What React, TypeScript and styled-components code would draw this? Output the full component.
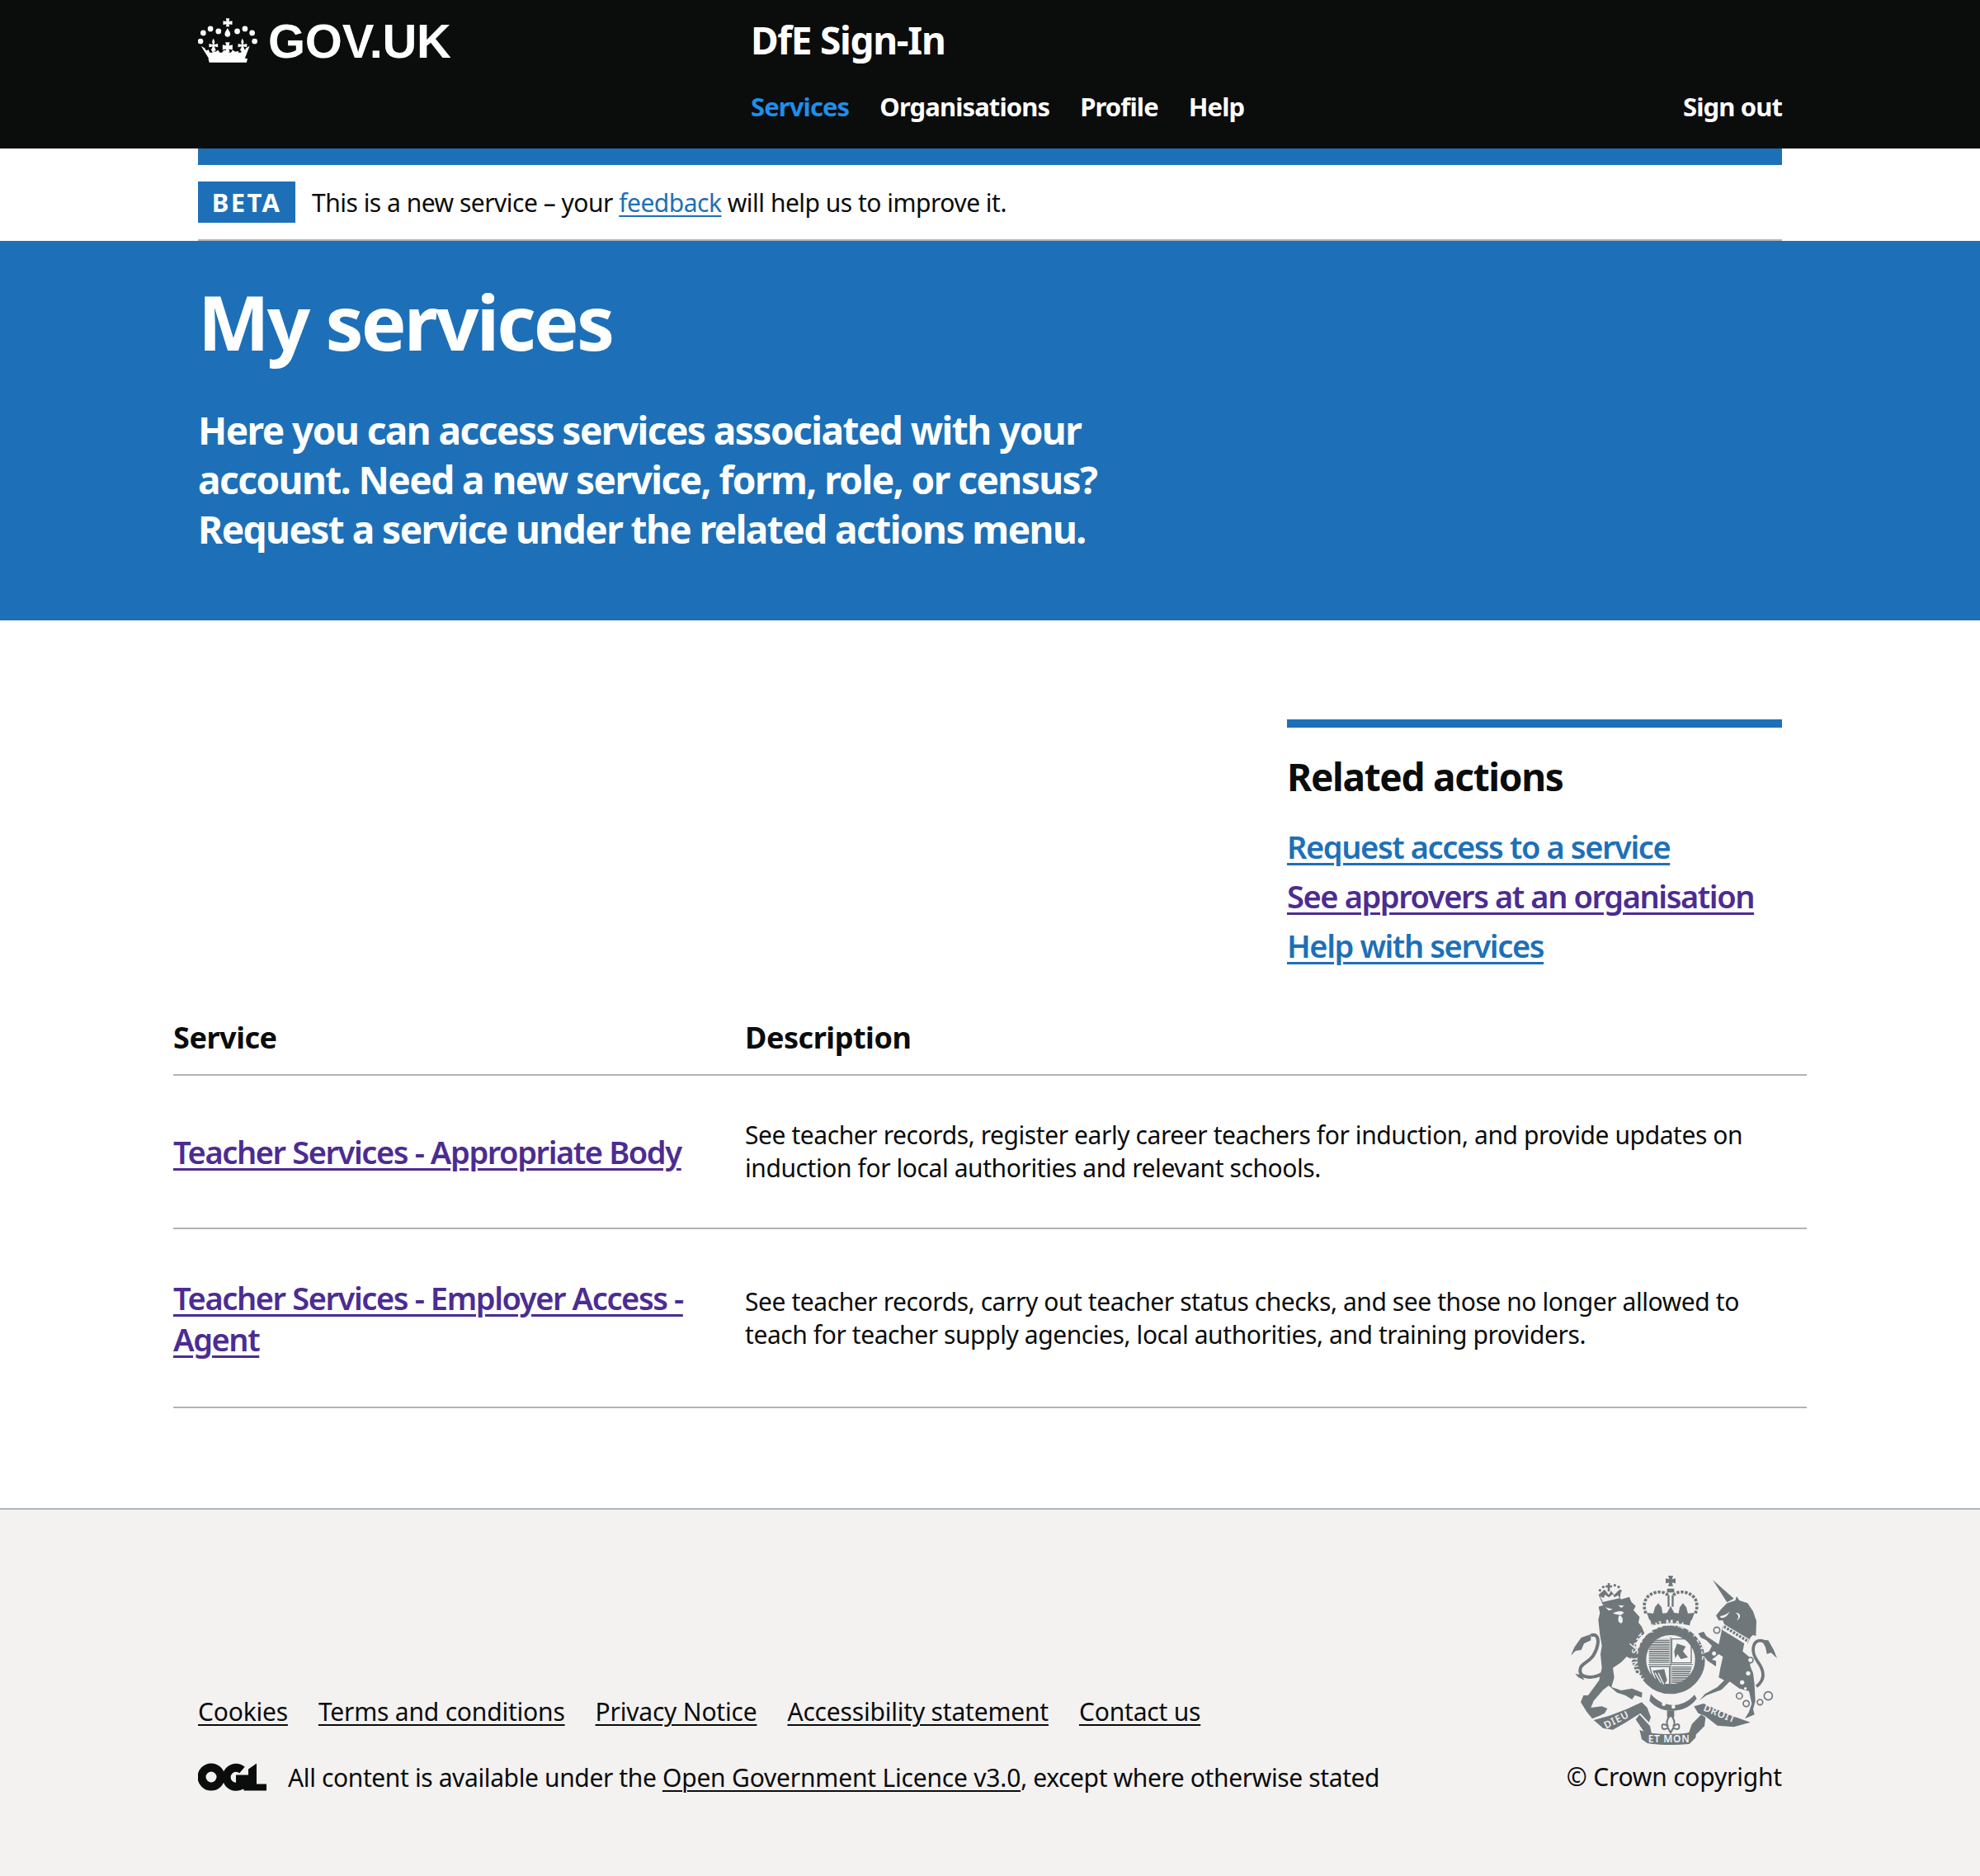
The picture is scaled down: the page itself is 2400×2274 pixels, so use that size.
import React from 'react';
import styled, { createGlobalStyle } from 'styled-components';

const GlobalStyle = createGlobalStyle`
  html, body { margin: 0; padding: 0; background: #fff; }
  body {
    font-family: "Noto Sans", "Open Sans", Arial, sans-serif;
    color: #0b0c0c;
  }
`;

const Page = styled.div`
  width: 2400px;
  height: 2274px;
  display: flex;
  flex-direction: column;
`;

const Container = styled.div`
  width: 1920px;
  margin: 0 auto;
`;

const Header = styled.header`
  background: #0b0c0c;
  height: 180px;
  color: #fff;
`;

const HeaderInner = styled(Container)`
  display: flex;
  height: 100%;
`;

const LogoCol = styled.div`
  width: 670px;
  display: flex;
  align-items: flex-start;
  padding-top: 22px;
  gap: 13px;
`;

const Logotype = styled.span`
  font-family: "Liberation Sans", Arial, sans-serif;
  font-weight: 700;
  font-size: 58px;
  line-height: 56px;
  letter-spacing: -0.3px;
`;

const HeaderMain = styled.div`
  flex: 1;
  display: flex;
  flex-direction: column;
`;

const ServiceName = styled.div`
  font-size: 46px;
  font-weight: 700;
  line-height: 60px;
  margin-top: 18px;
  letter-spacing: -1.3px;
`;

const Nav = styled.nav`
  display: flex;
  gap: 37px;
  margin-top: 26px;
  line-height: 50px;
`;

const NavLink = styled.a<{ $active?: boolean; $push?: boolean }>`
  font-size: 31px;
  font-weight: 700;
  letter-spacing: -0.9px;
  color: ${(p) => (p.$active ? '#1d8feb' : '#fff')};
  margin-left: ${(p) => (p.$push ? 'auto' : '0')};
`;

const BlueStrip = styled(Container)`
  height: 20px;
  background: #1d70b8;
`;

const Phase = styled(Container)`
  height: 90px;
  display: flex;
  align-items: center;
  gap: 20px;
  border-bottom: 2px solid #b1b4b6;
`;

const Tag = styled.span`
  background: #1d70b8;
  color: #fff;
  font-weight: 700;
  font-size: 31px;
  letter-spacing: 2.4px;
  width: 118px;
  height: 50px;
  display: flex;
  align-items: center;
  justify-content: center;
`;

const PhaseText = styled.span`
  font-size: 30px;
  letter-spacing: -0.5px;
`;

const TextLink = styled.a`
  color: #1d70b8;
  text-decoration: underline;
  text-decoration-thickness: 2px;
  text-underline-offset: 4px;
`;

const Hero = styled.section`
  background: #1d70b8;
  height: 460px;
  color: #fff;
`;

const HeroTitle = styled.h1`
  margin: 0;
  padding-top: 46px;
  font-size: 92px;
  line-height: 104px;
  font-weight: 700;
  letter-spacing: -2.9px;
`;

const HeroText = styled.p`
  margin: 49px 0 0;
  width: 1130px;
  font-size: 46px;
  line-height: 60px;
  font-weight: 700;
  letter-spacing: -1.55px;
`;

const Main = styled.main`
  flex: 1;
  display: flex;
  flex-direction: column;
  padding-top: 120px;
`;

const Related = styled.aside`
  width: 600px;
  margin-left: 1320px;
  border-top: 10px solid #1d70b8;
`;

const RelatedTitle = styled.h2`
  margin: 29px 0 25px;
  font-size: 46px;
  line-height: 60px;
  font-weight: 700;
  letter-spacing: -1.3px;
`;

const RelatedList = styled.ul`
  list-style: none;
  margin: 0;
  padding: 0;
`;

const RelatedItem = styled.li`
  height: 60px;
  font-size: 38px;
  line-height: 60px;
`;

const BoldLink = styled.a<{ $visited?: boolean }>`
  font-size: 38px;
  font-weight: 600;
  letter-spacing: -1.4px;
  color: ${(p) => (p.$visited ? '#4c2c92' : '#1d70b8')};
  text-decoration: underline;
  text-decoration-thickness: 3px;
  text-underline-offset: 5px;
`;

const Table = styled.table`
  width: 1980px;
  margin: 45px auto 0;
  border-collapse: collapse;
`;

const Th = styled.th`
  text-align: left;
  font-size: 36px;
  font-weight: 700;
  letter-spacing: -0.45px;
  height: 72px;
  padding: 0 0 9px;
  border-bottom: 2px solid #b1b4b6;
`;

const Row = styled.tr<{ $h: number }>`
  height: ${(p) => p.$h}px;
  border-bottom: 2px solid #b1b4b6;
`;

const NameCell = styled.td`
  width: 693px;
  padding: 0 20px 0 0;
  box-sizing: border-box;
  font-size: 38px;
  line-height: 50px;
`;

const DescCell = styled.td`
  font-size: 30px;
  line-height: 40px;
  letter-spacing: -0.42px;
  padding: 0 40px 0 0;
`;

const Footer = styled.footer`
  height: 446px;
  box-sizing: border-box;
  background: #f3f2f1;
  border-top: 2px solid #b1b4b6;
`;

const FooterInner = styled(Container)`
  display: flex;
  justify-content: space-between;
  height: 100%;
`;

const FooterMeta = styled.div`
  display: flex;
  flex-direction: column;
  padding-top: 220px;
`;

const FooterLinks = styled.div`
  display: flex;
  gap: 37px;
  line-height: 50px;
`;

const FooterLink = styled.a`
  font-size: 30px;
  letter-spacing: -0.2px;
  color: #0b0c0c;
  text-decoration: underline;
  text-decoration-thickness: 2px;
  text-underline-offset: 4px;
`;

const Licence = styled.div`
  display: flex;
  align-items: center;
  gap: 26px;
  margin-top: 29px;
  height: 50px;
  font-size: 30px;
  letter-spacing: -0.38px;
`;

const Copyright = styled.div`
  display: flex;
  flex-direction: column;
  align-items: flex-end;
  padding-top: 75px;
`;

const ArmsSvg = styled.svg`
  display: block;
`;

const CopyrightText = styled.div`
  font-size: 30px;
  line-height: 50px;
  letter-spacing: -0.2px;
  margin-top: 14px;
`;

const Crown = () => (
  <svg width="72" height="54" viewBox="45 35 215 160" fill="#fff" aria-hidden="true">
    <circle cx="64" cy="88" r="10" />
    <circle cx="90" cy="73" r="10" />
    <circle cx="119" cy="82" r="10" />
    <circle cx="187" cy="82" r="10" />
    <circle cx="215" cy="73" r="10" />
    <circle cx="241" cy="88" r="10" />
    <circle cx="54" cy="118" r="10" />
    <circle cx="250" cy="118" r="10" />
    <path d="M146 35h13l-2 11 12-2v14l-12-2 2 9h-13l2-9-12 2V44l12 2z" />
    <path d="M152 70c4 8 10 14 10 22a10 10 0 0 1-20 0c0-8 6-14 10-22z" />
    <path d="M100 108c6 8 7 14 3 22l14-3v13l-13-3 6 14-9 4-9-4 6-14-13 3v-13l14 3c-4-8-3-14 1-22z" />
    <path d="M205 108c6 8 7 14 3 22l14-3v13l-13-3 6 14-9 4-9-4 6-14-13 3v-13l14 3c-4-8-3-14 1-22z" />
    <path d="M144 122h16l-3 12 13-3v18l-13-3 3 12h-16l3-12-13 3v-18l13 3z" />
    <path d="M56 135l14 8c2 10 10 10 12 4l6 12h10l-3-6c10 4 18 2 22-4l7 10h8l6-8h12l6 8h8l7-10c4 6 12 8 22 4l-3 6h10l6-12c2 6 10 6 12-4l14-8-20 52c-40-5-90-5-124 0z" />
    <path d="M82 181c40-5 100-5 142 0l-3 14H86z" />
  </svg>
);

const Ogl = () => (
  <svg width="83" height="34" viewBox="0 0 83 33" aria-hidden="true">
    <circle cx="16" cy="16.5" r="11.5" fill="none" stroke="#0b0c0c" strokeWidth="10" />
    <path d="M53.5 8A11.5 11.5 0 1 0 53 26" fill="none" stroke="#0b0c0c" strokeWidth="10" />
    <path d="M46 14h15v19h-5l-3-5-7-2z" fill="#0b0c0c" />
    <path d="M61 7l10-7v25h12v8H61z" fill="#0b0c0c" />
  </svg>
);

const GREY = '#6f777b';
const BG = '#f3f2f1';
const MOTTO_FONT = 'Noto Sans, sans-serif';

const Arms = () => (
  <ArmsSvg width="260" height="210" viewBox="0 0 780 630" fill={GREY} aria-hidden="true">
    <defs>
      <path id="garter" d="M281 392A118 118 0 1 1 462 392" />
      <pattern id="stripes" width="8" height="8" patternUnits="userSpaceOnUse">
        <rect width="8" height="5" fill={GREY} />
      </pattern>
    </defs>

    {/* lion */}
    <path d="M113 128L170 108 225 92 232 110 248 125 240 140 262 165 258 185 270 200 280 225 262 240 248 262 255 300 285 345 282 375 250 370 232 325 215 310 195 330 165 350 170 385 160 420 195 432 235 425 272 440 270 458 245 450 235 465 210 450 180 440 150 415 130 430 95 470 85 495 125 490 145 498 135 515 115 525 90 535 70 510 48 475 58 450 75 450 115 395 125 350 120 300 125 270 118 230 112 175 118 150Z" />
    <path d="M226 262L276 306" stroke={BG} strokeWidth="4" fill="none" />
    <path d="M215 310L238 320 225 335 205 330Z" fill={BG} />
    <path d="M138 130L165 137 150 142ZM184 122L206 124 196 132ZM165 152C180 142 200 142 205 150L195 158 178 156Z" fill={BG} />
    <path d="M188 160C202 160 205 185 195 188 183 188 182 170 188 160Z" fill={BG} />
    <path d="M85 232C116 222 120 262 92 308 72 335 42 335 46 365 50 385 90 392 124 372" fill="none" stroke={GREY} strokeWidth="12" />
    <path d="M12 305L25 275 50 240 85 228 85 250 60 262 50 285 30 288Z" />
    <path d="M28 372L50 375 62 395 40 385Z" />
    {/* lion crown */}
    <path d="M128 108L118 90 132 96 136 84 150 94 165 82 170 94 184 86 190 100 194 74 186 68 170 85 158 70 150 85 135 65 120 78 113 85 125 112Z" />
    <path d="M124 112L192 96 196 106 130 122Z" />
    <circle cx="118" cy="68" r="5" /><circle cx="130" cy="56" r="5" /><circle cx="172" cy="50" r="5" /><circle cx="186" cy="56" r="5" /><circle cx="192" cy="70" r="5" />
    <path d="M146 42h8v8h8v8h-8v14h-8V58h-8v-8h8z" />

    {/* royal crown */}
    <path d="M366 15h18l-4 13 13-3v18l-13-3 4 13h-18l4-13-13 3V25l13 3z" />
    <path d="M362 62h26v14h-26z" />
    <path d="M285 152C270 115 285 82 325 75 345 72 360 78 366 88M465 152C480 115 465 82 425 75 405 72 390 78 384 88" fill="none" stroke={GREY} strokeWidth="11" strokeDasharray="10 5" />
    <rect x="364" y="86" width="7" height="42" />
    <rect x="379" y="86" width="7" height="42" />
    <path d="M288 150L312 152 318 130 330 115 342 130 346 152 362 150 375 125 388 150 404 152 408 130 420 115 432 130 438 152 462 150 452 176 298 176Z" />
    <path d="M300 172C340 160 410 160 450 172L444 196C405 186 345 186 306 196Z" />

    {/* garter and shield */}
    <circle cx="375" cy="320" r="107" fill="none" stroke={GREY} strokeWidth="36" />
    <text fill={BG} fontFamily={MOTTO_FONT} fontSize="31" fontWeight="600" letterSpacing="1">
      <textPath href="#garter" startOffset="0">HONI SOIT QUI MAL Y PENSE</textPath>
    </text>
    <path d="M302 245H371V332H296V262Z" fill="url(#stripes)" />
    <path d="M379 245H450V332H379Z" fill="none" stroke={GREY} strokeWidth="4" />
    <path d="M398 262L430 272 420 290 438 312 412 318 400 300 392 316 388 290Z" />
    <path d="M299 345H371V428C335 420 308 392 299 345Z" fill="none" stroke={GREY} strokeWidth="4" />
    <path d="M310 360L352 355 362 395 345 420 325 400Z" />
    <path d="M330 368L350 410M318 368L340 405" stroke={BG} strokeWidth="4" />
    <path d="M379 345H452C445 392 418 420 379 430Z" fill="url(#stripes)" />
    <path d="M375 238V436M294 338H456" stroke={GREY} strokeWidth="3" />
    <path d="M303 445C325 472 352 484 385 486 418 484 440 472 462 448L470 462C445 494 415 506 380 506 345 506 318 492 298 470Z" />
    <circle cx="350" cy="482" r="7" fill={BG} />
    <circle cx="385" cy="492" r="7" fill={BG} />

    {/* fleur de lis */}
    <rect x="362" y="505" width="26" height="25" />
    <path d="M375 522C392 540 392 552 384 564 398 552 408 552 406 566 404 578 390 572 385 568L375 586 365 568C360 572 346 578 344 566 342 552 352 552 366 564 358 552 358 540 375 522Z" fill={BG} stroke={GREY} strokeWidth="6" />

    {/* motto ribbon */}
    <path d="M95 540L150 525 215 500 270 475 290 495 303 530 296 548 265 515 210 550 165 575 130 570Z" />
    <path d="M248 538L262 520 300 562 306 590 280 585Z" />
    <path d="M262 575C300 596 440 596 470 575L466 604 444 626C400 632 330 632 290 624L270 610Z" />
    <path d="M460 490L495 480 585 520 665 548 605 565 545 560 500 525 475 515Z" />
    <path d="M440 590L452 555 486 520 502 530 498 562 470 590Z" />
    <text x="140" y="572" fill={BG} fontFamily={MOTTO_FONT} fontSize="36" fontWeight="600" letterSpacing="3" transform="rotate(-27 140 572)">DIEU</text>
    <text x="293" y="620" fill={BG} fontFamily={MOTTO_FONT} fontSize="36" fontWeight="600" letterSpacing="2">ET MON</text>
    <text x="492" y="505" fill={BG} fontFamily={MOTTO_FONT} fontSize="36" fontWeight="600" letterSpacing="2" transform="rotate(22 492 505)">DROIT</text>

    {/* unicorn */}
    <g transform="translate(375 0)">
      <path d="M153 30L230 98 205 112Z" />
      <path d="M165 160L185 135 205 115 235 105 240 90 250 105 280 115 300 145 312 180 310 235 300 230 290 240 280 262 195 192 190 178 175 178Z" />
      <path d="M190 195L175 265 130 235 120 218 100 225 110 240 130 250 150 270 140 290 115 300 135 325 165 345 165 325 150 320 175 300 190 310 180 355 175 385 195 395 170 420 125 445 105 468 130 450 185 430 215 400 250 425 285 435 295 480 285 510 270 535 305 520 300 500 308 470 305 410 300 370 290 345 285 310 262 290 270 250Z" />
      <path d="M192 190L286 246 276 266 188 212Z" fill={BG} />
      <path d="M194 200L282 254" fill="none" stroke={GREY} strokeWidth="10" strokeDasharray="8 5" />
      <path d="M180 162C195 160 205 155 215 145 205 165 195 170 182 168Z" fill={BG} />
      <path d="M236 150C256 148 258 170 240 178 250 168 248 158 236 150Z" fill={BG} />
      <path d="M345 256C300 234 288 285 315 325 345 365 342 395 312 418" fill="none" stroke={GREY} strokeWidth="11" />
      <path d="M330 248L355 250 375 285 387 315 365 295 350 300 345 275Z" />
      <circle cx="168" cy="213" r="11" fill={BG} stroke={GREY} strokeWidth="5" />
      <circle cx="158" cy="298" r="10" fill={BG} stroke={GREY} strokeWidth="5" />
      <circle cx="290" cy="322" r="10" fill={BG} stroke={GREY} strokeWidth="5" />
      <circle cx="282" cy="370" r="8" fill={BG} />
      <circle cx="260" cy="403" r="8" fill={BG} />
      <circle cx="272" cy="425" r="5" fill={BG} />
      <g fill="none" stroke={GREY} strokeWidth="5">
        <circle cx="250" cy="452" r="11" />
        <circle cx="275" cy="480" r="11" />
        <circle cx="325" cy="475" r="10" />
        <circle cx="355" cy="452" r="15" />
      </g>
    </g>
  </ArmsSvg>
);

export default function App() {
  return (
    <Page>
      <GlobalStyle />
      <Header>
        <HeaderInner>
          <LogoCol>
            <Crown />
            <Logotype>GOV.UK</Logotype>
          </LogoCol>
          <HeaderMain>
            <ServiceName>DfE Sign-In</ServiceName>
            <Nav>
              <NavLink $active>Services</NavLink>
              <NavLink>Organisations</NavLink>
              <NavLink>Profile</NavLink>
              <NavLink>Help</NavLink>
              <NavLink $push>Sign out</NavLink>
            </Nav>
          </HeaderMain>
        </HeaderInner>
      </Header>
      <BlueStrip />
      <Phase>
        <Tag>BETA</Tag>
        <PhaseText>
          This is a new service – your <TextLink>feedback</TextLink> will help us to improve it.
        </PhaseText>
      </Phase>
      <Hero>
        <Container>
          <HeroTitle>My services</HeroTitle>
          <HeroText>
            Here you can access services associated with your account. Need a new service, form,
            role, or census? Request a service under the related actions menu.
          </HeroText>
        </Container>
      </Hero>
      <Main>
        <Container>
          <Related>
            <RelatedTitle>Related actions</RelatedTitle>
            <RelatedList>
              <RelatedItem><BoldLink>Request access to a service</BoldLink></RelatedItem>
              <RelatedItem><BoldLink $visited>See approvers at an organisation</BoldLink></RelatedItem>
              <RelatedItem><BoldLink>Help with services</BoldLink></RelatedItem>
            </RelatedList>
          </Related>
        </Container>
        <Table>
          <thead>
            <tr>
              <Th>Service</Th>
              <Th>Description</Th>
            </tr>
          </thead>
          <tbody>
            <Row $h={186}>
              <NameCell><BoldLink $visited>Teacher Services - Appropriate Body</BoldLink></NameCell>
              <DescCell>
                See teacher records, register early career teachers for induction, and provide
                updates on induction for local authorities and relevant schools.
              </DescCell>
            </Row>
            <Row $h={217}>
              <NameCell><BoldLink $visited>Teacher Services - Employer Access - Agent</BoldLink></NameCell>
              <DescCell>
                See teacher records, carry out teacher status checks, and see those no longer
                allowed to teach for teacher supply agencies, local authorities, and training
                providers.
              </DescCell>
            </Row>
          </tbody>
        </Table>
      </Main>
      <Footer>
        <FooterInner>
          <FooterMeta>
            <FooterLinks>
              <FooterLink>Cookies</FooterLink>
              <FooterLink>Terms and conditions</FooterLink>
              <FooterLink>Privacy Notice</FooterLink>
              <FooterLink>Accessibility statement</FooterLink>
              <FooterLink>Contact us</FooterLink>
            </FooterLinks>
            <Licence>
              <Ogl />
              <span>
                All content is available under the <FooterLink>Open Government Licence v3.0</FooterLink>, except where otherwise stated
              </span>
            </Licence>
          </FooterMeta>
          <Copyright>
            <Arms />
            <CopyrightText>© Crown copyright</CopyrightText>
          </Copyright>
        </FooterInner>
      </Footer>
    </Page>
  );
}
